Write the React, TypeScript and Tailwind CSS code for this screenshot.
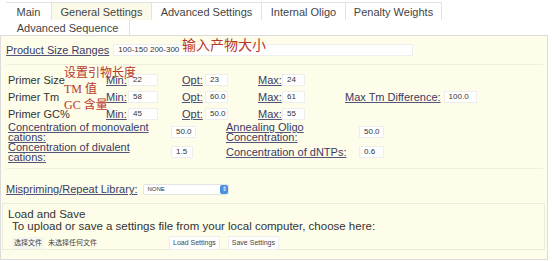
import React from 'react';

const tabs = ['Main', 'General Settings', 'Advanced Settings', 'Internal Oligo', 'Penalty Weights'];
const tabWidths = ['w-[46px]', 'w-[100px]', 'w-[110px]', 'w-[84px]', 'w-[96px]'];

function Field({ value, w }: { value: string; w: string }) {
  return (
    <span className={`${w} shrink-0 h-[12px] bg-white border border-[#eeeeee] text-[8px] leading-[10px] pl-[4px] text-[#333] inline-block`}>
      {value}
    </span>
  );
}

function Lnk({ children, className = '' }: { children: React.ReactNode; className?: string }) {
  return <span className={`shrink-0 whitespace-nowrap underline decoration-[#55557a] text-[#3a3a66] ${className}`}>{children}</span>;
}

function PrimerRow({ label, min, opt, max, extra }: { label: string; min: string; opt: string; max: string; extra?: boolean }) {
  return (
    <div className="flex items-center h-[17px]">
      <span className="w-[98px] shrink-0 text-[#333]">{label}</span>
      <Lnk className="w-[22px]">Min:</Lnk>
      <Field value={min} w="w-[30px]" />
      <Lnk className="ml-[24px] w-[23px]">Opt:</Lnk>
      <Field value={opt} w="w-[23px]" />
      <Lnk className="ml-[30px] w-[24px]">Max:</Lnk>
      <Field value={max} w="w-[23px]" />
      {extra && (
        <>
          <Lnk className="ml-[40px] mr-[3px]">Max Tm Difference:</Lnk>
          <Field value="100.0" w="w-[33px]" />
        </>
      )}
    </div>
  );
}

export default function App() {
  return (
    <div className="w-[552px] h-[261px] bg-white overflow-hidden text-[11px] leading-[12px] text-[#333]" style={{ fontFamily: '"Liberation Sans", "Noto Sans CJK SC", sans-serif' }}>
      <div className="flex flex-wrap pl-[6px] w-[460px] pt-[2px]">
        {tabs.map((t, i) => (
          <div
            key={t}
            className={`${tabWidths[i]} h-[18px] flex items-center justify-center border border-b-0 border-[#e2e2e2] border-l-0 ${i === 0 ? 'border-l' : ''} ${i === 1 ? 'bg-[#fbfae8]' : 'bg-white'} text-[#444]`}
          >
            {t}
          </div>
        ))}
        <div className="w-[124px] h-[15px] flex items-center justify-center border-r border-[#e2e2e2] bg-white text-[#444]">
          Advanced Sequence
        </div>
      </div>

      <div className="relative w-[548px] h-[225px] border border-[#dcdcdc] bg-[#fdfde9] pl-[5px]">
        <div className="flex items-center h-[26px] pt-[2px]">
          <Lnk>Product Size Ranges</Lnk>
          <span className="ml-[4px] w-[300px] h-[12px] bg-white border border-[#eeeeee] text-[8px] leading-[10px] pl-[4px]">100-150 200-300</span>
        </div>
        <div className="border-t border-[#f0f0dc] mt-[2px] mr-[4px]" />

        <div className="pt-[6px] pl-[2px]">
          <PrimerRow label="Primer Size" min="22" opt="23" max="24" />
          <PrimerRow label="Primer Tm" min="58" opt="60.0" max="61" extra />
          <PrimerRow label="Primer GC%" min="45" opt="50.0" max="55" />
        </div>

        <div className="pl-[2px] grid grid-cols-[163px_55px_133px_30px] items-center">
          <Lnk className="h-[20px] leading-[10px]">Concentration of monovalent<br />cations:</Lnk>
          <Field value="50.0" w="w-[25px]" />
          <Lnk className="h-[20px] leading-[10px]">Annealing Oligo<br />Concentration:</Lnk>
          <Field value="50.0" w="w-[25px]" />
          <Lnk className="h-[20px] leading-[10px]">Concentration of divalent<br />cations:</Lnk>
          <Field value="1.5" w="w-[22px]" />
          <Lnk className="h-[20px] leading-[20px]">Concentration of dNTPs:</Lnk>
          <Field value="0.6" w="w-[25px]" />
        </div>
        <div className="border-t border-[#f0f0dc] mt-[6px] mr-[4px]" />

        <div className="flex items-center h-[26px] mt-[7px]">
          <Lnk>Mispriming/Repeat Library:</Lnk>
          <span className="ml-[6px] w-[86px] h-[11px] bg-white border border-[#e4e4e4] rounded-[2px] flex items-center justify-between pl-[3px] text-[6px]">
            NONE
            <span className="w-[8px] h-[9px] rounded-[2px] bg-[#4a8fe0] text-white text-[6px] leading-[9px] text-center">⇕</span>
          </span>
        </div>

        <div className="ml-[-4px] mr-[2px] mt-[1px] h-[47px] border border-[#ececdc] pl-[5px] pt-[4px]">
          <div className="text-[11.5px]">Load and Save</div>
          <div className="pl-[4px] text-[11.5px] leading-[13px]">To upload or save a settings file from your local computer, choose here:</div>
          <div className="flex items-center pl-[4px] mt-[3px] text-[7px] text-[#444]">
            <span className="px-[2px] bg-[#f6f6f0]">选择文件</span>
            <span className="ml-[4px]">未选择任何文件</span>
            <span className="ml-[72px] px-[3px] bg-white border border-[#eee]">Load Settings</span>
            <span className="ml-[8px] px-[3px] bg-white border border-[#eee]">Save Settings</span>
          </div>
        </div>

        <div className="absolute left-[181px] top-[1px] text-[14px] leading-[16px] text-[#b8362a]">输入产物大小</div>
        <div className="absolute left-[63px] top-[29px] text-[12px] leading-[16px] text-[#b8362a]">
          <div>设置引物长度</div>
          <div style={{ fontFamily: '"Liberation Serif", "Noto Sans CJK SC", serif' }}>TM 值</div>
          <div style={{ fontFamily: '"Liberation Serif", "Noto Sans CJK SC", serif' }}>GC 含量</div>
        </div>
      </div>
    </div>
  );
}
